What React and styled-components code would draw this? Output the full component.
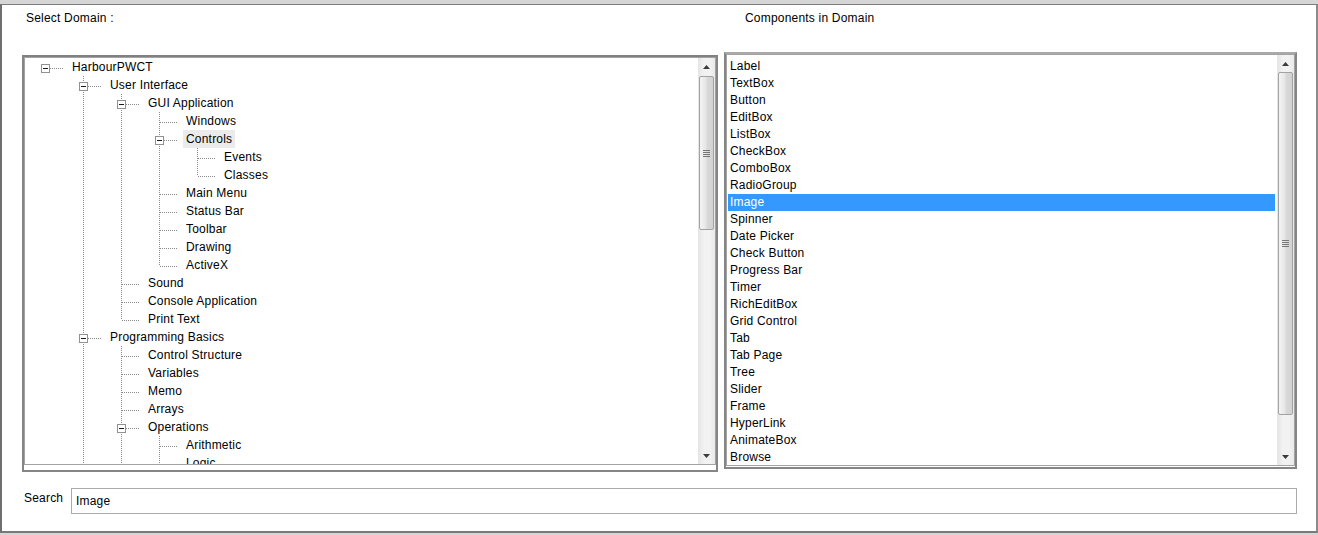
import React from 'react';
import styled, { createGlobalStyle, css } from 'styled-components';

const GlobalStyle = createGlobalStyle`
  html, body {
    margin: 0;
    padding: 0;
    background: #d6d6d6;
    font-family: 'Liberation Sans', Arial, sans-serif;
    font-size: 12px;
    letter-spacing: 0.2px;
    color: #000;
  }
`;

const Window = styled.div`
  margin-top: 4px;
  height: 526px;
  border-top: 1px solid #7c7c7c;
  border-left: 2px solid #6f6f6f;
  border-right: 2px solid #8a8a8a;
  border-bottom: 2px solid #7a7a7a;
  background: #fff;
  overflow: hidden;
`;

const Columns = styled.div`
  display: grid;
  grid-template-columns: 696px 573px;
  column-gap: 6px;
  row-gap: 26px;
  padding: 6px 0 0 20px;
  align-items: start;
`;

const Caption = styled.div`
  line-height: 15px;
  height: 15px;
  padding-left: ${p => p.$indent}px;
  white-space: nowrap;
`;

const Panel = styled.div`
  margin-top: ${p => p.$top || 0}px;
  height: 417px;
  box-sizing: border-box;
  border: 2px solid #858585;
  border-top-color: ${p => p.$lightTop ? '#a9a9a9' : '#808080'};
  padding-bottom: ${p => p.$gap || 0}px;
  display: flex;
`;

const Control = styled.div`
  flex: 1;
  display: flex;
  border: 1px solid #a3a3a3;
  background: #fff;
  overflow: hidden;
  min-height: 0;
`;

const TreeRows = styled.div`
  flex: 1;
  padding-left: 1px;
  overflow: hidden;
`;

const Row = styled.div`
  display: flex;
  height: 18px;
  line-height: 18px;
  white-space: nowrap;
`;

const vdots = 'linear-gradient(to bottom, #8a8a8a 50%, transparent 50%)';
const hdots = 'linear-gradient(to right, #8a8a8a 50%, transparent 50%)';

const Guide = styled.span`
  position: relative;
  flex: 0 0 38px;
  height: 18px;
  ${p => p.$line && css`
    &::before {
      content: '';
      position: absolute;
      left: 19px;
      top: 0;
      height: 18px;
      width: 1px;
      background-image: ${vdots};
      background-size: 1px 2px;
    }
  `}
`;

const Connector = styled.span`
  position: relative;
  flex: 0 0 38px;
  height: 18px;
  &::before {
    content: '';
    position: absolute;
    left: 19px;
    width: 1px;
    top: ${p => (p.$top ? 0 : 10)}px;
    height: ${p => (p.$top ? 10 : 0) + (p.$bottom ? 8 : 0)}px;
    background-image: ${vdots};
    background-size: 1px 2px;
  }
  &::after {
    content: '';
    position: absolute;
    left: 20px;
    width: 17px;
    top: 10px;
    height: 1px;
    background-image: ${hdots};
    background-size: 2px 1px;
  }
`;

const Expander = styled.span`
  position: absolute;
  left: 15px;
  top: 6px;
  width: 7px;
  height: 7px;
  border: 1px solid #919191;
  background: #fff;
  z-index: 1;
  &::after {
    content: '';
    position: absolute;
    left: 1px;
    top: 3px;
    width: 5px;
    height: 1px;
    background: #1a1a1a;
  }
`;

const NodeLabel = styled.span`
  margin-left: 5px;
  padding: 0 3px;
  height: 18px;
  background: ${p => (p.$hot ? '#ebebeb' : 'transparent')};
`;

const ScrollBar = styled.div`
  flex: 0 0 17px;
  display: flex;
  flex-direction: column;
  background: linear-gradient(to right, #e4e4e4, #f2f2f2 35%, #f2f2f2 70%, #e9e9e9);
`;

const ArrowBtn = styled.div`
  flex: 0 0 17px;
  display: flex;
  align-items: center;
  justify-content: center;
`;

const Thumb = styled.div`
  margin: ${p => p.$offset}px 1px 0 1px;
  flex: 0 0 ${p => p.$size}px;
  box-sizing: border-box;
  border: 1px solid #a2a2a2;
  border-radius: 2px;
  background: linear-gradient(to right, #f4f4f4, #e6e6e6 45%, #d9d9d9 55%, #d2d2d2);
  display: flex;
  align-items: center;
  justify-content: center;
`;

const Grip = styled.div`
  width: 7px;
  height: 7px;
  background: repeating-linear-gradient(to bottom, #777 0 1px, transparent 1px 2px);
`;

const Track = styled.div`
  flex: 1;
`;

const ListRows = styled.div`
  flex: 1;
  padding: 3px 1px 0 1px;
  overflow: hidden;
`;

const ListItem = styled.div`
  height: 17px;
  line-height: 17px;
  padding-left: 2px;
  margin-right: 1px;
  white-space: nowrap;
  background: ${p => (p.$selected ? '#3399ff' : 'transparent')};
  color: ${p => (p.$selected ? '#fff' : '#000')};
`;

const SearchRow = styled.div`
  display: flex;
  align-items: flex-start;
  margin-top: 16px;
  padding-left: 22px;
`;

const SearchLabel = styled.label`
  flex: 0 0 47px;
  padding-top: 3px;
  line-height: 15px;
`;

const SearchInput = styled.input`
  width: 1226px;
  height: 26px;
  box-sizing: border-box;
  border: 1px solid #ababab;
  padding: 0 4px;
  margin: 0;
  font-family: 'Liberation Sans', Arial, sans-serif;
  font-size: 12px;
  letter-spacing: 0.2px;
  color: #000;
  outline: none;
  background: #fff;
`;

const Arrow = ({ up }) => (
  <svg width="7" height="4" viewBox="0 0 7 4">
    <path d={up ? 'M0 4 L3.5 0 L7 4 Z' : 'M0 0 L3.5 4 L7 0 Z'} fill="#3c3c3c" />
  </svg>
);

const Scroller = ({ offset, size }) => (
  <ScrollBar>
    <ArrowBtn><Arrow up /></ArrowBtn>
    <Thumb $offset={offset} $size={size}><Grip /></Thumb>
    <Track />
    <ArrowBtn><Arrow /></ArrowBtn>
  </ScrollBar>
);

const tree = [
  { d: 0, t: 'HarbourPWCT', kids: true, next: false },
  { d: 1, t: 'User Interface', kids: true, next: true },
  { d: 2, t: 'GUI Application', kids: true, next: true },
  { d: 3, t: 'Windows', next: true },
  { d: 3, t: 'Controls', kids: true, next: true, hot: true },
  { d: 4, t: 'Events', next: true },
  { d: 4, t: 'Classes', next: false },
  { d: 3, t: 'Main Menu', next: true },
  { d: 3, t: 'Status Bar', next: true },
  { d: 3, t: 'Toolbar', next: true },
  { d: 3, t: 'Drawing', next: true },
  { d: 3, t: 'ActiveX', next: false },
  { d: 2, t: 'Sound', next: true },
  { d: 2, t: 'Console Application', next: true },
  { d: 2, t: 'Print Text', next: false },
  { d: 1, t: 'Programming Basics', kids: true, next: true },
  { d: 2, t: 'Control Structure', next: true },
  { d: 2, t: 'Variables', next: true },
  { d: 2, t: 'Memo', next: true },
  { d: 2, t: 'Arrays', next: true },
  { d: 2, t: 'Operations', kids: true, next: true },
  { d: 3, t: 'Arithmetic', next: true },
  { d: 3, t: 'Logic', next: true },
];

const components = [
  'Label', 'TextBox', 'Button', 'EditBox', 'ListBox', 'CheckBox', 'ComboBox',
  'RadioGroup', 'Image', 'Spinner', 'Date Picker', 'Check Button', 'Progress Bar',
  'Timer', 'RichEditBox', 'Grid Control', 'Tab', 'Tab Page', 'Tree', 'Slider',
  'Frame', 'HyperLink', 'AnimateBox', 'Browse',
];

const DomainTree = () => {
  const stack = [];
  return (
    <TreeRows>
      {tree.map((n, i) => {
        stack[n.d] = n.next;
        const guides = stack.slice(0, n.d);
        return (
          <Row key={i}>
            {guides.map((g, k) => <Guide key={k} $line={g} />)}
            <Connector $top={n.d > 0} $bottom={n.next}>
              {n.kids && <Expander />}
            </Connector>
            <NodeLabel $hot={n.hot}>{n.t}</NodeLabel>
          </Row>
        );
      })}
    </TreeRows>
  );
};

export default function App() {
  return (
    <>
      <GlobalStyle />
      <Window>
        <Columns>
          <Caption $indent={4}>Select Domain :</Caption>
          <Caption $indent={21}>Components in Domain</Caption>
          <Panel $top={3} $gap={5}>
            <Control>
              <DomainTree />
              <Scroller offset={1} size={154} />
            </Control>
          </Panel>
          <Panel $lightTop $gap={1}>
            <Control>
              <ListRows>
                {components.map(c => (
                  <ListItem key={c} $selected={c === 'Image'}>{c}</ListItem>
                ))}
              </ListRows>
              <Scroller offset={0} size={343} />
            </Control>
          </Panel>
        </Columns>
        <SearchRow>
          <SearchLabel>Search</SearchLabel>
          <SearchInput defaultValue="Image" />
        </SearchRow>
      </Window>
    </>
  );
}
